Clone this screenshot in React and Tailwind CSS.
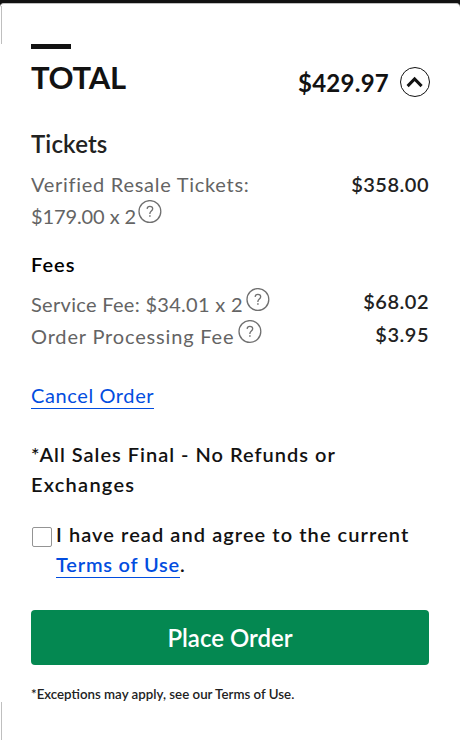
const fees = [
  { label: "Service Fee: $34.01 x 2", amount: "$68.02", track: "tracking-[0.3px]", iconGap: "ml-[3px]", amountPad: "" },
  { label: "Order Processing Fee", amount: "$3.95", track: "tracking-[0.83px]", iconGap: "ml-[4px]", amountPad: "pt-px" },
];

export default function App() {
  return (
    <div className="h-[740px] w-[460px] overflow-hidden bg-[#121212] pt-[3px] font-['Lato',sans-serif] text-[#121212]">
      <div className="relative h-[737px] rounded-t-[4px] border-t border-[#bfbfbf] bg-white pl-[31px] pr-[31px]">
        <EdgeLines />

        <div className="h-[40px]" />
        <div className="h-[5px] w-[40px] bg-[#121212]" />

        <div className="flex h-[72px] items-start justify-between">
          <h1 className="mt-[8px] text-[31px] font-bold leading-[40px] tracking-[-0.3px]">TOTAL</h1>
          <div className="-mr-px mt-[18px] flex items-start">
            <span className="pt-px text-[24px] font-bold leading-[30px] tracking-[0.25px]">$429.97</span>
            <ToggleButton />
          </div>
        </div>

        <h2 className="h-[47px] pt-[6px] text-[24px] font-semibold leading-[34px] tracking-[0.15px] text-[#222222]">
          Tickets
        </h2>
        <div className="flex justify-between text-[20px] leading-[32px]">
          <div className="text-[#646464]">
            <div className="tracking-[0.72px]">Verified Resale Tickets:</div>
            <div className="flex">
              <span className="tracking-[-0.1px]">$179.00 x 2</span>
              <HelpIcon className="ml-[2px]" />
            </div>
          </div>
          <Amount>$358.00</Amount>
        </div>

        <h3 className="h-[56px] pt-[16px] text-[20px] font-semibold leading-[32px] tracking-[1px] text-black">Fees</h3>
        {fees.map((fee) => (
          <div key={fee.label} className="flex h-[32px] justify-between text-[20px] leading-[32px]">
            <div className="flex text-[#646464]">
              <span className={fee.track}>{fee.label}</span>
              <HelpIcon className={fee.iconGap} />
            </div>
            <div className={`-mt-[3px] ${fee.amountPad}`}>
              <Amount>{fee.amount}</Amount>
            </div>
          </div>
        ))}

        <div className="mt-[30px] flex">
          <a href="#cancel" className="h-[27px] border-b border-[#024ddf] text-[20px] leading-[26px] tracking-[0.6px] text-[#024ddf]">
            Cancel Order
          </a>
        </div>

        <p className="mt-[30px] text-[20px] font-semibold leading-[30px] tracking-[1px]">
          *All Sales Final - No Refunds or
          <br />
          <span className="tracking-[1.25px]">Exchanges</span>
        </p>

        <div className="mt-[20px] flex text-[20px] font-semibold leading-[30px]">
          <input type="checkbox" className="ml-px mt-[8px] size-[20px] shrink-0 appearance-none rounded-[2px] border border-[#949494] bg-white" />
          <div className="ml-[4px] whitespace-nowrap">
            <div className="tracking-[1.07px]">I have read and agree to the current</div>
            <div className="flex tracking-[0.8px]">
              <a href="#terms" className="h-[29px] border-b border-[#024ddf] text-[#024ddf]">
                Terms of Use
              </a>
              .
            </div>
          </div>
        </div>

        <button className="mt-[31px] h-[55px] w-full rounded-[4px] bg-[#048851] pt-px text-[24px] font-semibold leading-[30px] text-white">
          Place Order
        </button>
        <p className="mt-[20px] text-[13.3px] font-semibold leading-[18px] text-[#222222]">
          *Exceptions may apply, see our Terms of Use.
        </p>
      </div>
    </div>
  );
}

function EdgeLines() {
  return (
    <>
      <span className="absolute left-px top-[2px] h-[38px] w-px bg-[#bfbfbf]" />
      <span className="absolute bottom-0 left-px h-[38px] w-px bg-[#bfbfbf]" />
    </>
  );
}

function ToggleButton() {
  return (
    <button aria-label="Collapse order total" className="ml-[11px] size-[30px]">
      <svg width="30" height="30" viewBox="0 0 30 30" fill="none" stroke="#121212">
        <circle cx="15" cy="15" r="14.5" />
        <path d="M7.6 19.1 14.6 12l7 7.1" strokeWidth="3" />
      </svg>
    </button>
  );
}

function HelpIcon({ className = "" }) {
  return (
    <svg width="24" height="24" viewBox="0 0 24 24" fill="none" stroke="#707070" className={className}>
      <circle cx="11.9" cy="11.5" r="10.9" strokeWidth="1.3" />
      <path d="M9.1 8.9c.1-1.6 1.2-2.5 2.8-2.5 1.7 0 2.8.9 2.8 2.4 0 2.2-2.8 2.4-2.8 4.7v.4" strokeWidth="1.3" />
      <path d="M11.9 15.2v1.6" strokeWidth="1.5" />
    </svg>
  );
}

function Amount({ children }) {
  return <span className="text-[20px] font-semibold leading-[32px] tracking-[0.5px] text-[#222222]">{children}</span>;
}
